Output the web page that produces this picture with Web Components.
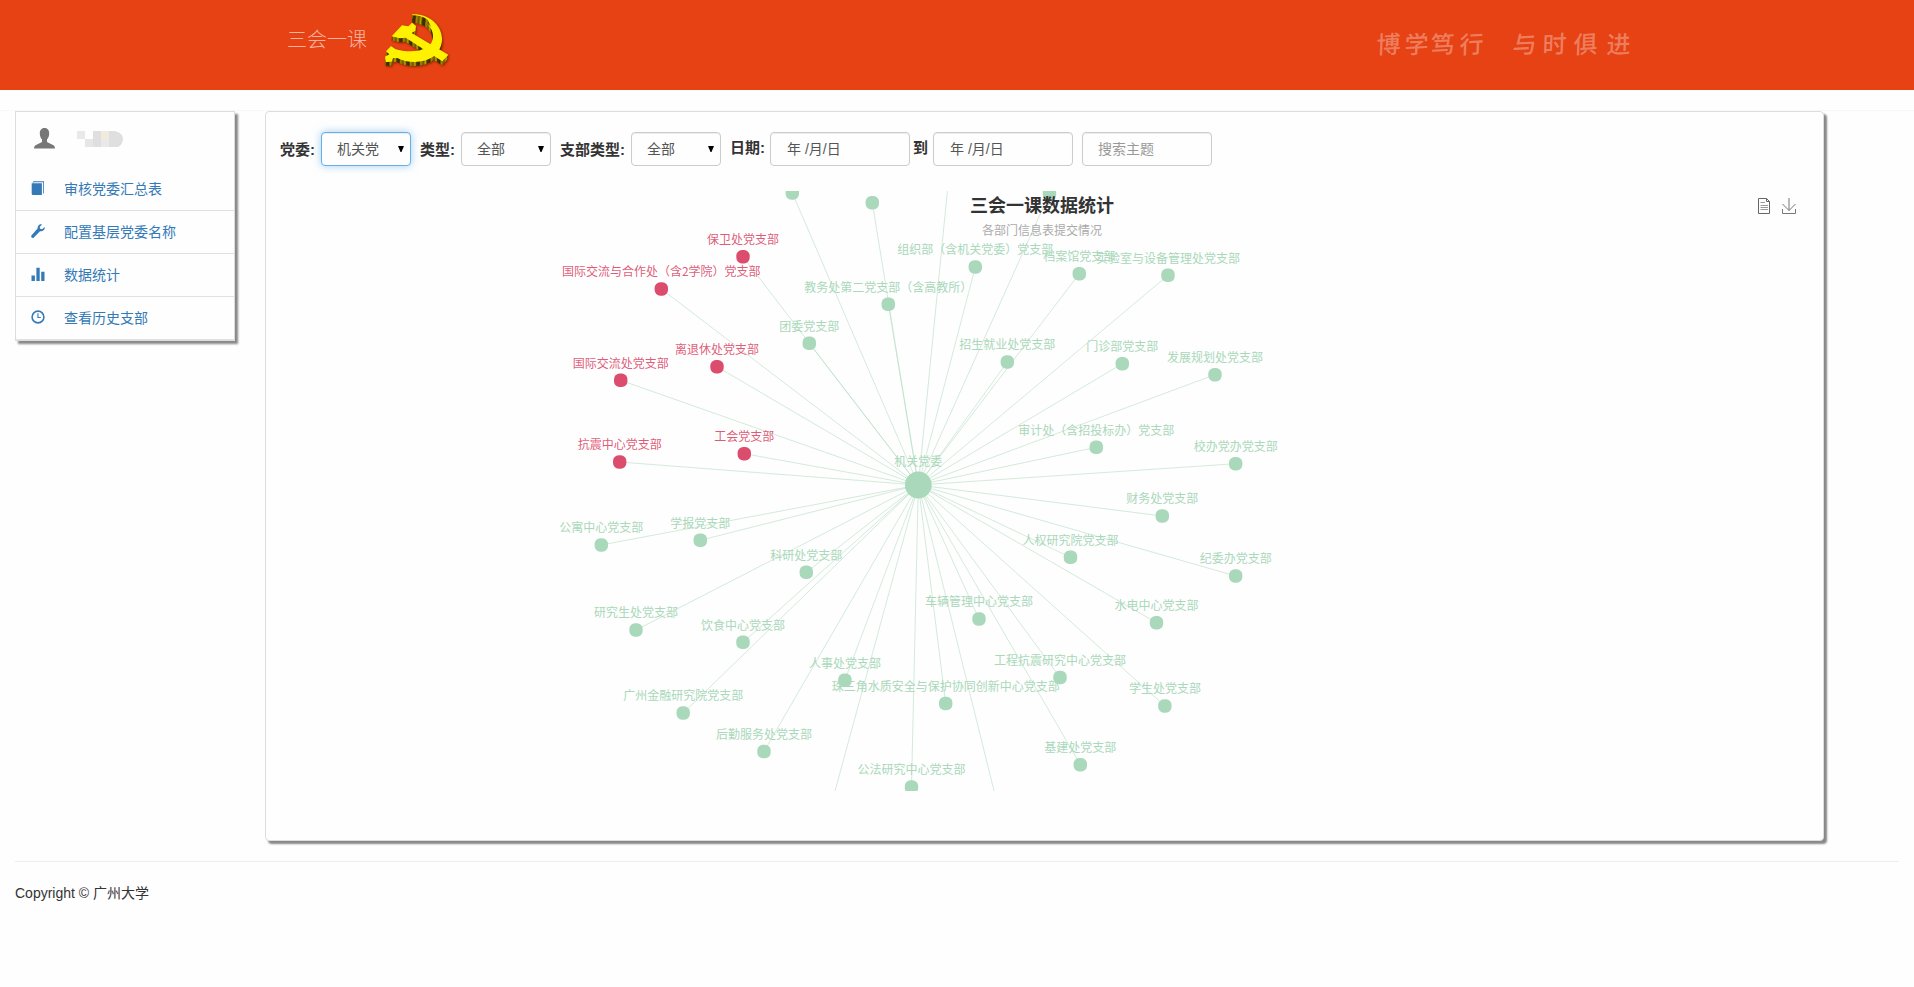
<!DOCTYPE html>
<html lang="zh-CN">
<head>
<meta charset="utf-8">
<title>三会一课</title>
<style>
body{margin:0;background:#fefefe;color:#333;font:14px/20px "Liberation Sans","Noto Sans CJK SC",sans-serif}
</style>
</head>
<body>
<party-app></party-app>
<script>
class Base extends HTMLElement{
  constructor(){super();this.attachShadow({mode:'open'});}
  connectedCallback(){this.shadowRoot.innerHTML=this.render();}
}

class PartyEmblem extends Base{
  render(){return `<style>:host{display:block;width:67px;height:59px}svg{display:block;overflow:visible;filter:drop-shadow(1px 1px 1px rgba(80,20,0,.6))}</style>
<svg width="67" height="59" viewBox="42 22 201 177">
 <defs>
  <linearGradient id="edge" gradientUnits="userSpaceOnUse" x1="0" y1="0" x2="30" y2="4" spreadMethod="repeat"><stop offset="0" stop-color="#6b5400"/><stop offset=".2" stop-color="#c2a600"/><stop offset=".35" stop-color="#4a3600"/><stop offset=".6" stop-color="#3a2800"/><stop offset=".75" stop-color="#a58a00"/><stop offset="1" stop-color="#6b5400"/></linearGradient>
  <path id="sickle" d="M127 29C174 27 213 58 216 100C217 121 208 140 193 153C164 176 116 177 82 160L69 160L65 171L48 172L45 156L58 149L48 140L63 124L76 133C103 142 146 143 167 131C192 117 199 82 171 57C158 47 143 43 128 42Z"/>
  <path id="hammer" d="M65 95L96 62L115 65L126 54L138 64L136 78L125 85L235 150L217 170L107 99L90 101Z"/>
 </defs>
 <g transform="translate(-1 12)" fill="url(#edge)"><use href="#sickle"/><use href="#hammer"/></g>
 <g transform="translate(-1 6)" fill="url(#edge)"><use href="#sickle"/><use href="#hammer"/></g>
 <g fill="#fff200"><use href="#sickle"/><use href="#hammer"/></g>
 <path d="M127 32C146 32 161 36 173 45L184 66Q160 48 128 45Z" fill="url(#edge)"/>
</svg>`}
}
customElements.define('party-emblem',PartyEmblem);

class PartyHeader extends Base{
  render(){
    const words=[['博',1375.5],['学',1404],['笃',1430],['行',1459],['与',1511.5],['时',1541.5],['俱',1573],['进',1606]];
    let x=1375;
    const chars=words.map(([c,p])=>{const m=p-x;x=p+26;return `<span style="margin-left:${m}px">${c}</span>`}).join('');
    return `<style>
:host{display:flex;height:90px;background:#e64213;box-sizing:border-box}
.brand{margin:26px 0 0 287px;width:80px;height:28px;font-size:20px;line-height:28px;color:#f9b3a0;font-weight:300;white-space:nowrap}
party-emblem{margin:12px 0 0 17px}
.motto{display:flex;margin:26px 0 0 924px;color:rgba(255,255,255,.32);font:500 24px/34px "Noto Sans CJK SC",sans-serif}
.motto span{width:26px;flex:none;transform:skewX(-5deg) rotate(-3deg)}
</style><div class="brand">三会一课</div><party-emblem></party-emblem><div class="motto">${chars}</div>`}
}
customElements.define('party-header',PartyHeader);

class SideItem extends Base{
  render(){
    const icons={
      book:'<path d="M1.500 1.700Q1.800 .3 3.200 .3H13V12.500H12.200V1.300H3.600Z"/><path d="M.7 2.200H10.900V14H2Q.7 14 .7 12.800Z"/>',
      wrench:'<path d="M13.600 3.100l-2.500 2.100-1.900-.5-.5-1.700L11 .5C8.700-.2 6.300 1.500 6.600 4.500L.6 11.300c-.7.8-.5 1.700.1 2.200.6.6 1.500.6 2.200-.1l6.100-6.100c3 .3 5.200-1.400 4.600-4.200Z"/>',
      stats:'<path d="M.5 8.500h3.400V14H.5ZM5.400.8H8.700V14H5.400ZM10.200 4.800H13.500V14H10.200Z"/>',
      time:'<path fill-rule="evenodd" d="M7 .3a6.700 6.700 0 1 0 0 13.400A6.700 6.700 0 0 0 7 .3ZM7 1.900a5.100 5.100 0 1 1 0 10.200a5.100 5.100 0 0 1 0-10.200Z"/><path d="M6.400 3.300H7.500V6.900H9.800V8H6.400Z"/>'};
    return `<style>
:host{display:flex;height:42px;border-bottom:1px solid #dfe1e5;color:#337ab7;align-items:center}
svg{margin:0 0 2px 15px;width:14px;height:14px;flex:none;overflow:visible;fill:#337ab7}
span{margin-left:19px;white-space:nowrap}
</style><svg viewBox="0 0 14 14">${icons[this.getAttribute('icon')]}</svg><span><slot></slot></span>`}
}
customElements.define('side-item',SideItem);

class SideMenu extends Base{
  render(){return `<style>
:host{display:block;width:218px;height:228px;border:1px solid #ddd;background:#fefefe;box-shadow:3px 3px 2px #888;flex:none}
.user{display:flex;height:56px}
.user svg{margin:16px 0 0 18px;flex:none}
.user .mask{margin:16px 0 0 22px}
</style><div class="user">
<svg width="21" height="21" viewBox="0 0 21 21" fill="#777"><path d="M10.500 0C13.900 0 15.300 2.500 15.200 5.600C15.100 8.800 14 10.500 13 11.600V14L19.500 17.300Q21 18.200 21 20.500H0Q0 18.200 1.500 17.300L8 14V11.600C7 10.500 5.900 8.800 5.800 5.600C5.700 2.500 7.100 0 10.500 0Z"/></svg>
<svg class="mask" width="46" height="21" viewBox="0 0 46 21"><path fill="#dfdfdf" d="M16 3h21c7 1 9 5 9 8q0 5-5 8H16Z"/><path fill="#e9e9e9" d="M0 3h8v8H0ZM24 11h8v8h-8Z"/><path fill="#fefefe" d="M8 3h8v8H8Z"/><path fill="#f2e9df" d="M24 3h8v8h-8Z"/><path fill="#e4e7e4" d="M8 11h8v8H8Z"/></svg>
</div>
<side-item icon="book">审核党委汇总表</side-item><side-item icon="wrench">配置基层党委名称</side-item><side-item icon="stats">数据统计</side-item><side-item icon="time">查看历史支部</side-item>`}
}
customElements.define('side-menu',SideMenu);

class FormBox extends Base{
  render(){return `<style>
:host{display:flex;box-sizing:border-box;height:34px;border:1px solid #ccc;border-radius:4px;background:#fefefe;box-shadow:inset 0 1px 1px rgba(0,0,0,.075);align-items:center;padding:0 6px 0 15px;color:#555;white-space:pre;flex:none}
:host([focused]){border-color:#66afe9;box-shadow:inset 0 1px 1px rgba(0,0,0,.075),0 0 8px rgba(102,175,233,.6)}
:host([hint]){color:#999}
:host(.date){padding-left:16px}
span{flex:1;overflow:hidden}
</style><span><slot></slot></span>${this.hasAttribute('select')?'<svg width="6" height="6" viewBox="0 0 6 6"><path d="M0 0H6L3.500 6H2.500Z"/></svg>':''}`}
}
customElements.define('form-box',FormBox);

class FilterBar extends Base{
  render(){return `<style>
:host{display:flex;padding:20px 0 0 14px;height:34px}
b{font-size:15px;line-height:34px;flex:none;white-space:nowrap;margin-right:1px}
.low{padding-top:1px}.high{margin-top:-1px}
form-box[select]{width:90px;margin-right:9px}
.date{width:140px}
</style>
<b class="low" style="width:40px">党委:</b><form-box select focused>机关党</form-box>
<b class="low" style="width:40px">类型:</b><form-box select>全部</form-box>
<b class="low" style="width:70px">支部类型:</b><form-box select>全部</form-box>
<b class="high" style="width:39px">日期:</b><form-box class="date">年 /月/日</form-box>
<b class="high" style="width:19px;margin-left:3px">到</b><form-box class="date">年 /月/日</form-box>
<form-box hint style="width:130px;margin-left:9px">搜索主题</form-box>`}
}
customElements.define('filter-bar',FilterBar);

class BranchGraph extends Base{
  render(){
    const G='#a9d8ba',R='#dc4c6c',cx=918.3,cy=485;
    const nodes=[
[792.3,193,''],[872.3,202.7,''],[1049.5,193.5,''],[948.5,180,'',G,1],[828.5,815,'',G,1],[1000,815,'',G,1],
[743,256.7,'保卫处党支部',R],[661.3,289,'国际交流与合作处（含2学院）党支部',R],[888.3,304.3,'教务处第二党支部（含高教所）'],[809.3,343.3,'团委党支部'],
[717,366.7,'离退休处党支部',R],[620.7,380.3,'国际交流处党支部',R],[619.7,462,'抗震中心党支部',R],[744.3,453.7,'工会党支部',R],
[975.3,267,'组织部（含机关党委）党支部'],[1079.3,273.7,'档案馆党支部'],[1168,275.3,'实验室与设备管理处党支部'],[1007.3,362,'招生就业处党支部'],
[1122.3,363.7,'门诊部党支部'],[1215,374.7,'发展规划处党支部'],[1096.3,447.3,'审计处（含招投标办）党支部'],[1235.7,463.7,'校办党办党支部'],
[601.3,545,'公寓中心党支部'],[700.3,540.3,'学报党支部'],[806.3,572.3,'科研处党支部'],[636,630,'研究生处党支部'],[743,642.3,'饮食中心党支部'],
[844.9,680.3,'人事处党支部'],[683.2,713,'广州金融研究院党支部'],[764,751.5,'后勤服务处党支部'],[911.5,787,'公法研究中心党支部'],
[1162.3,516,'财务处党支部'],[1070.5,557.3,'人权研究院党支部'],[1235.7,576,'纪委办党支部'],[979,619,'车辆管理中心党支部'],[1156.5,622.7,'水电中心党支部'],
[1060,677.5,'工程抗震研究中心党支部'],[945.7,703.5,'珠三角水质安全与保护协同创新中心党支部'],[1164.9,706,'学生处党支部'],[1080.3,764.7,'基建处党支部']];
    return `<style>
:host{display:block;margin:25px 0 0 15px;width:1526px;height:600px}
svg{display:block}
text{font-family:"Noto Sans CJK SC",sans-serif;font-size:12px;text-anchor:middle}
.title{font-size:18px;font-weight:700;fill:#333}
.tool{fill:none;stroke:#777}
</style><svg width="1526" height="600" viewBox="281 191 1526 600">
<g stroke="${G}" stroke-opacity=".5">${nodes.map(n=>`<line x1="${cx}" y1="${cy}" x2="${n[0]}" y2="${n[1]}"/>`).join('')}</g>
<circle cx="${cx}" cy="${cy}" r="13.400" fill="${G}"/>
${nodes.filter(n=>!n[4]).map(n=>`<rect x="${n[0]-6.7}" y="${n[1]-6.7}" width="13.400" height="13.400" rx="5.600" fill="${n[3]||G}"/>`).join('')}
<text x="${cx}" y="466" fill="${G}">机关党委</text>
${nodes.filter(n=>n[2]).map(n=>`<text x="${n[0]}" y="${Math.round(n[1]-12.6)}" fill="${n[3]||G}" fill-opacity="${n[3]?.92:1}">${n[2]}</text>`).join('')}
<text class="title" x="1042" y="212">三会一课数据统计</text>
<text x="1042" y="235" fill="#aaa">各部门信息表提交情况</text>
<g class="tool"><path stroke="#666" d="M1758.500 198.500H1766.500L1769.500 201.500V213.500H1758.500ZM1766.500 198.500V201.500H1769.500"/><path stroke="#999" d="M1760.500 202.500H1765M1760.500 205.500H1768M1760.500 207.500H1768M1760.500 209.500H1768"/>
<path d="M1789 198V210.500M1782.500 204L1789 210.500L1795.500 204M1782.500 209V213.500H1795.500V209"/></g>
</svg>`}
}
customElements.define('branch-graph',BranchGraph);

class ContentPanel extends Base{
  render(){return `<style>:host{display:block;box-sizing:border-box;width:1559px;height:730px;border:1px solid #ddd;border-radius:4px;background:#fefefe;box-shadow:3px 3px 2px #888;flex:none}</style><slot></slot>`}
}
customElements.define('content-panel',ContentPanel);

class PartyApp extends Base{
  render(){return `<style>
:host{display:block}
main{display:flex;align-items:flex-start;gap:30px;margin-top:20px;border-top:1px solid #f8f8f8;padding:0 15px}
footer{margin:20px 15px 0;border-top:1px solid #eee;padding-top:21px}
</style><party-header></party-header>
<main><side-menu></side-menu><content-panel><filter-bar></filter-bar><branch-graph></branch-graph></content-panel></main>
<footer>Copyright © 广州大学</footer>`}
}
customElements.define('party-app',PartyApp);
</script>
</body>
</html>
